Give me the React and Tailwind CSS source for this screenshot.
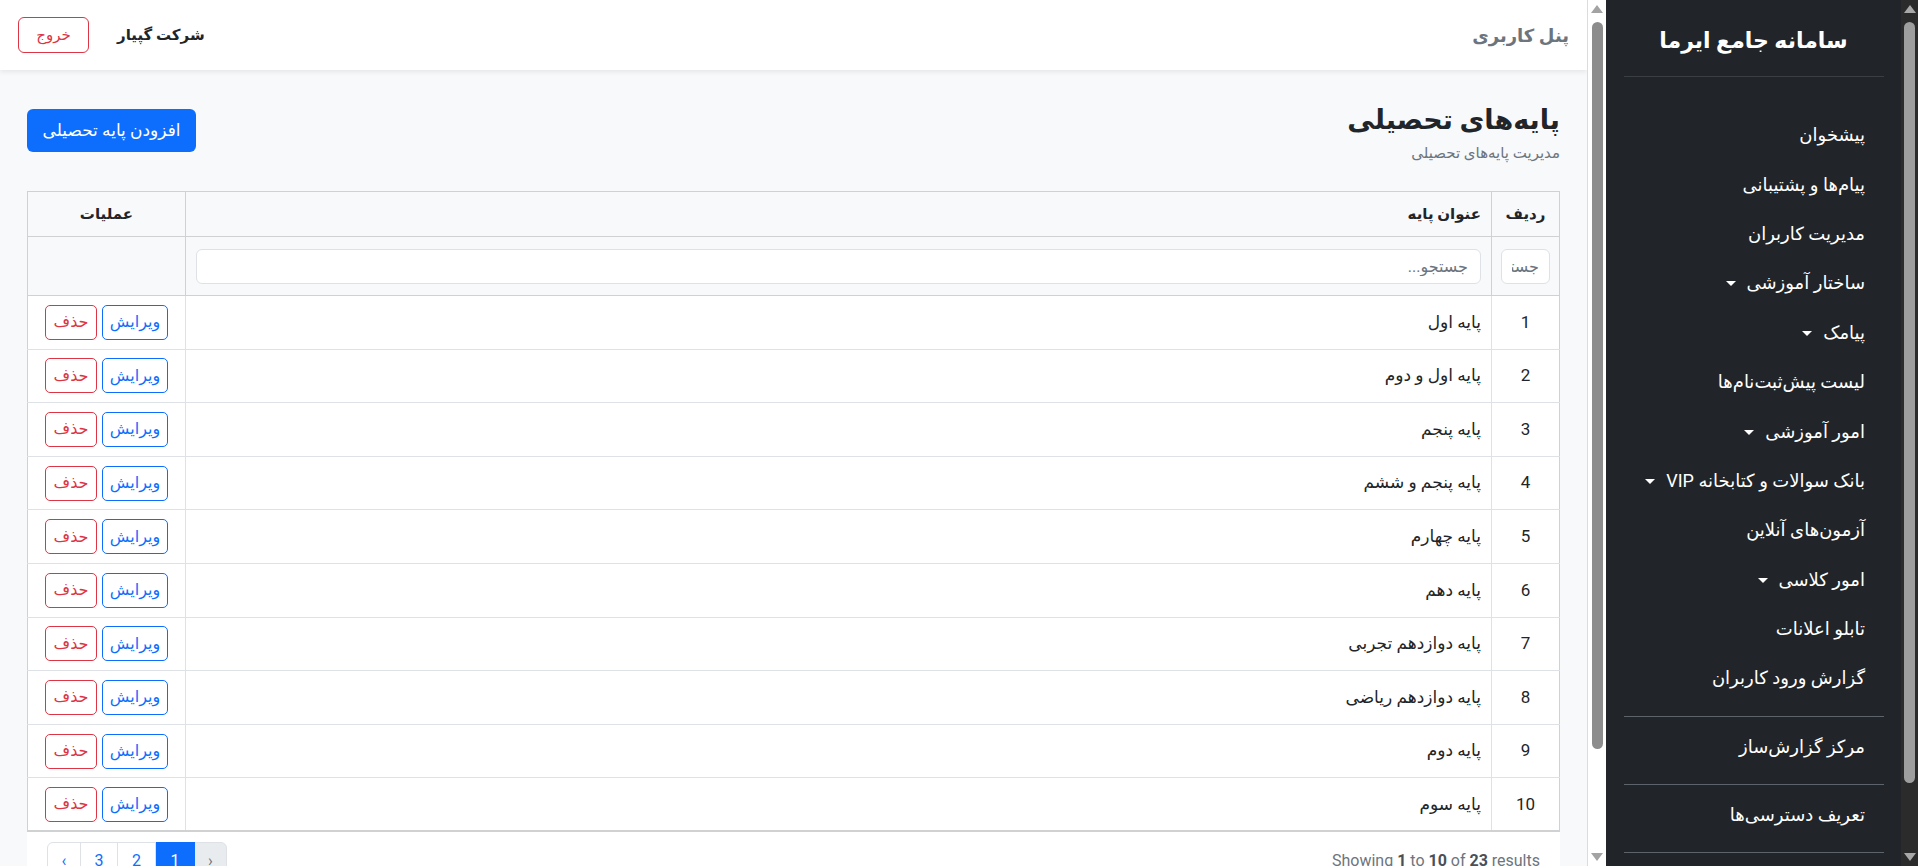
const grades = [
  "پایه اول",
  "پایه اول و دوم",
  "پایه پنجم",
  "پایه پنجم و ششم",
  "پایه چهارم",
  "پایه دهم",
  "پایه دوازدهم تجربی",
  "پایه دوازدهم ریاضی",
  "پایه دوم",
  "پایه سوم",
];

const menu = [
  { label: "پیشخوان" },
  { label: "پیام\u200cها و پشتیبانی" },
  { label: "مدیریت کاربران" },
  { label: "ساختار آموزشی", caret: true },
  { label: "پیامک", caret: true },
  { label: "لیست پیش\u200cثبت\u200cنام\u200cها" },
  { label: "امور آموزشی", caret: true },
  { label: "بانک سوالات و کتابخانه VIP", caret: true },
  { label: "آزمون\u200cهای آنلاین" },
  { label: "امور کلاسی", caret: true },
  { label: "تابلو اعلانات" },
  { label: "گزارش ورود کاربران" },
];

function MenuItem({ label, caret }) {
  return (
    <a className="flex h-[49.4px] cursor-pointer items-center gap-[11px] pr-[36px] text-[18px] text-white">
      <span>{label}</span>
      {caret && (
        <span className="mt-[2px] h-0 w-0 border-x-[5px] border-t-[5px] border-x-transparent border-t-white" />
      )}
    </a>
  );
}

function SideDivider() {
  return <div className="ml-[18px] mr-[17px] mb-[5px] mt-[13px] h-px bg-[#5c636a]" />;
}

// drawn scrollbar strip (the page's own scrollbars are hidden in the capture)
function ScrollStrip({ dark, thumbEnd }) {
  return (
    <div
      className={
        dark
          ? "flex h-screen w-[17px] shrink-0 flex-col items-center bg-[#2b2b2b]"
          : "flex h-screen w-[19px] shrink-0 flex-col items-center border-l border-[#dcdcdc] bg-white"
      }
    >
      <span
        className={
          "mt-[5px] h-0 w-0 border-x-[6px] border-b-[8px] border-x-transparent " +
          (dark ? "border-b-[#a8a8a8]" : "border-b-[#a3a3a3]")
        }
      />
      <div
        className={"mt-[9px] w-[11px] rounded-full " + (dark ? "bg-[#9e9e9e]" : "bg-[#8c8c8c]")}
        style={{ height: thumbEnd - 22 }}
      />
      <div className="flex-1" />
      <span
        className={
          "mb-[5px] h-0 w-0 border-x-[6px] border-t-[8px] border-x-transparent " +
          (dark ? "border-t-[#a8a8a8]" : "border-t-[#a3a3a3]")
        }
      />
    </div>
  );
}

export default function App() {
  return (
    <div dir="ltr" className="flex h-screen w-full overflow-hidden [font-family:Roboto,'DejaVu_Sans',sans-serif] text-[#212529]">
      {/* main pane */}
      <div className="flex h-screen flex-1">
        <main className="h-screen flex-1 overflow-y-auto bg-[#f8f9fa]">
          <div dir="rtl" className="pb-[140px]">
            <header className="flex h-[70px] items-center justify-between bg-white px-[18px] shadow-[0_2px_5px_rgba(0,0,0,0.08)]">
              <span className="text-[18px] font-bold text-[#6c757d]">پنل کاربری</span>
              <div className="flex items-center gap-[28px]">
                <span className="text-[15px] font-bold">شرکت گپیار</span>
                <button className="h-[36px] w-[71px] rounded-md border border-[#dc3545] text-[15px] text-[#dc3545]">
                  خروج
                </button>
              </div>
            </header>

            <div className="px-[27px] pt-[32px]">
              <div className="flex items-start justify-between">
                <div>
                  <h1 className="text-[27px] font-bold leading-[36px]">پایه‌های تحصیلی</h1>
                  <p className="mt-[4px] text-[15px] leading-[22px] text-[#6c757d]">مدیریت پایه‌های تحصیلی</p>
                </div>
                <button className="mt-[7px] h-[43px] w-[169px] rounded-md bg-[#0d6efd] text-[17px] text-white">
                  افزودن پایه تحصیلی
                </button>
              </div>

              <div className="mt-[27px] bg-white">
                <table className="w-full table-fixed border-collapse">
                  <colgroup>
                    <col className="w-[68px]" />
                    <col />
                    <col className="w-[158px]" />
                  </colgroup>
                  <thead>
                    <tr className="h-[45px] bg-[#f8f9fa] text-[15px] font-bold">
                      <th className="border border-[#cfd1d3] px-[10px] text-center">ردیف</th>
                      <th className="border border-[#cfd1d3] px-[10px] text-right">عنوان پایه</th>
                      <th className="border border-[#cfd1d3] px-[10px] text-center">عملیات</th>
                    </tr>
                    <tr className="h-[59px] bg-[#f8f9fa]">
                      <th className="border border-[#cfd1d3] px-[9px] font-normal">
                        <input
                          placeholder="جستجو..."
                          className="h-[35px] w-full rounded-md border border-[#dee2e6] bg-white px-[10px] text-[16px] outline-none placeholder:text-[#6c757d]"
                        />
                      </th>
                      <th className="border border-[#cfd1d3] px-[10px] font-normal">
                        <input
                          placeholder="جستجو..."
                          className="h-[35px] w-full rounded-md border border-[#dee2e6] bg-white px-[12px] text-[16px] outline-none placeholder:text-[#6c757d]"
                        />
                      </th>
                      <th className="border border-[#cfd1d3]" />
                    </tr>
                  </thead>
                  <tbody className="border-b-2 border-[#cfd1d3]">
                    {grades.map((g, i) => (
                      <tr key={g} className="h-[53.6px]">
                        <td className="border border-[#dee2e6] border-r-[#cfd1d3] text-center text-[17px]">{i + 1}</td>
                        <td className="border border-[#dee2e6] px-[10px] text-right text-[17px]">{g}</td>
                        <td className="border border-[#dee2e6] border-l-[#cfd1d3]">
                          <div className="flex items-center justify-center gap-[5px]">
                            <button className="h-[35px] w-[66px] rounded-[5px] border border-[#0d6efd] text-[16px] text-[#0d6efd]">
                              ویرایش
                            </button>
                            <button className="h-[35px] w-[52px] rounded-[5px] border border-[#dc3545] text-[16px] text-[#dc3545]">
                              حذف
                            </button>
                          </div>
                        </td>
                      </tr>
                    ))}
                  </tbody>
                </table>

                <div className="flex items-center justify-between px-[20px] py-[10px]">
                  <p dir="ltr" className="text-[16px] text-[#6c757d]">
                    Showing <span className="font-bold text-[#495057]">1</span> to{" "}
                    <span className="font-bold text-[#495057]">10</span> of{" "}
                    <span className="font-bold text-[#495057]">23</span> results
                  </p>
                  <ul className="flex text-[16px]">
                    <li className="flex h-[38px] w-[33px] items-center justify-center rounded-r-md border border-[#dee2e6] bg-[#e9ecef] text-[#6c757d]">
                      ‹
                    </li>
                    <li className="-mr-px flex h-[38px] w-[40px] items-center justify-center border border-[#0d6efd] bg-[#0d6efd] text-white">
                      1
                    </li>
                    <li className="-mr-px flex h-[38px] w-[39px] items-center justify-center border border-[#dee2e6] text-[#0d6efd]">
                      2
                    </li>
                    <li className="-mr-px flex h-[38px] w-[38px] items-center justify-center border border-[#dee2e6] text-[#0d6efd]">
                      3
                    </li>
                    <li className="-mr-px flex h-[38px] w-[34px] items-center justify-center rounded-l-md border border-[#dee2e6] text-[#0d6efd]">
                      ›
                    </li>
                  </ul>
                </div>
              </div>
            </div>
          </div>
        </main>
        <ScrollStrip thumbEnd={749} />
      </div>

      {/* sidebar */}
      <aside className="flex h-screen w-[312px] shrink-0 bg-[#212529]">
        <div className="h-screen flex-1 overflow-y-auto">
          <div dir="rtl" className="pb-[99px]">
            <div className="flex h-[76px] items-center justify-center pt-[4px] text-[22px] font-bold text-white">
              سامانه جامع ایرما
            </div>
            <div className="ml-[18px] mr-[17px] h-px bg-[#3a3f44]" />
            <nav className="pt-[33px]">
              {menu.map((m) => (
                <MenuItem key={m.label} {...m} />
              ))}
            </nav>
            <SideDivider />
            <MenuItem label="مرکز گزارش‌ساز" />
            <SideDivider />
            <MenuItem label="تعریف دسترسی‌ها" />
            <SideDivider />
          </div>
        </div>
        <ScrollStrip dark thumbEnd={783} />
      </aside>
    </div>
  );
}
